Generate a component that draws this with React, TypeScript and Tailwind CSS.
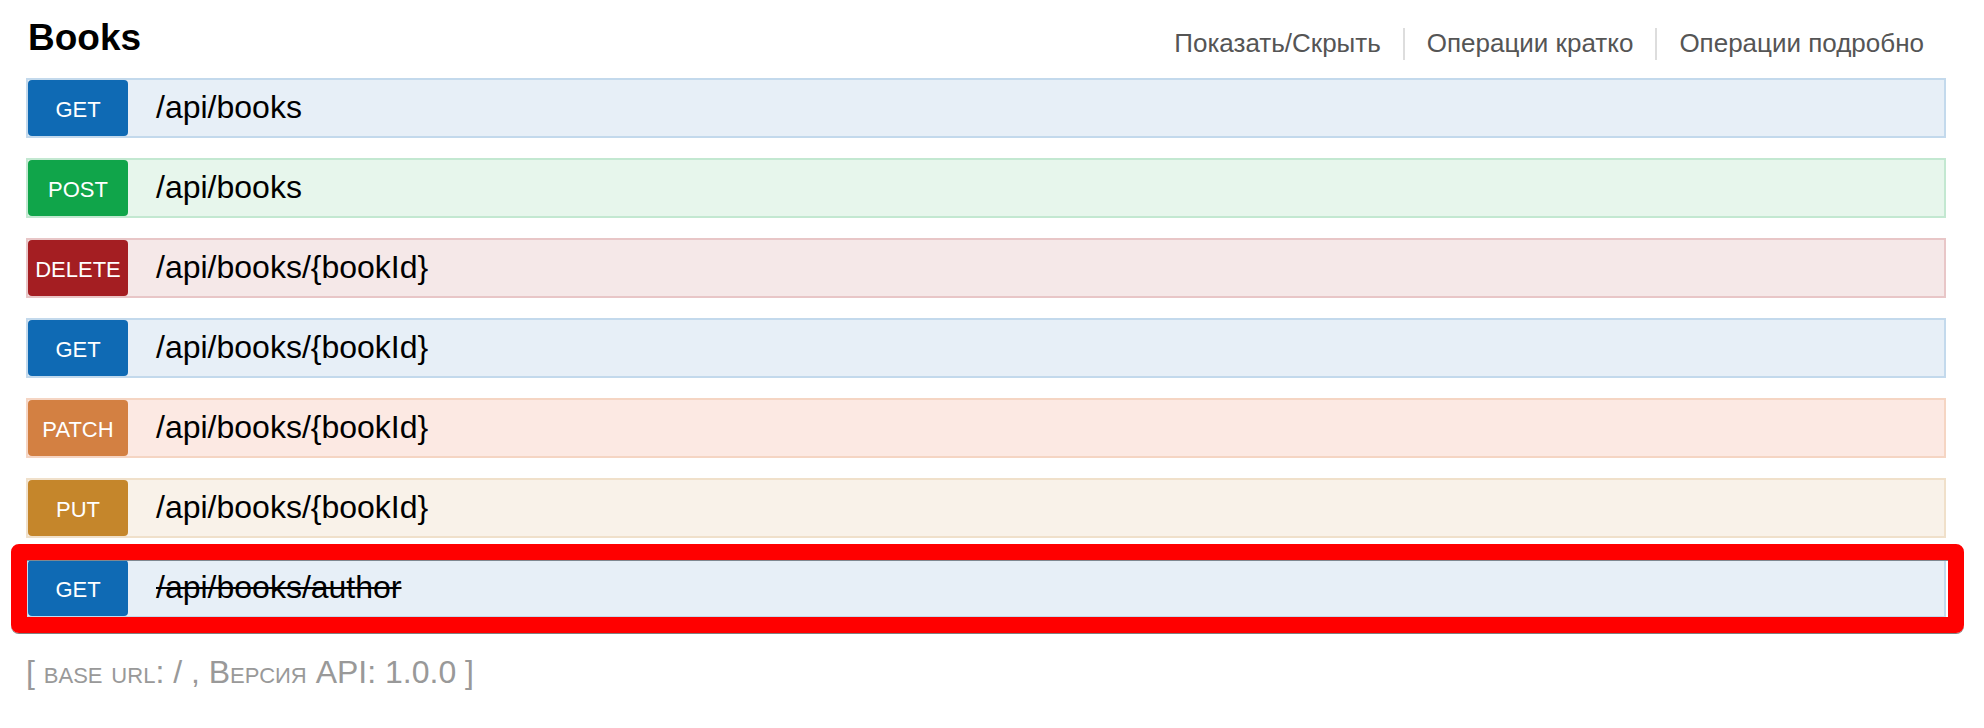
type Operation = {
  method: string;
  path: string;
  row: string;
  badge: string;
  deprecated?: boolean;
};

const GET_ROW = "border-[#c3d9ec] bg-[#e7eff7]";
const GET_BADGE = "bg-[#0f6ab4]";

const operations: Operation[] = [
  { method: "GET", path: "/api/books", row: GET_ROW, badge: GET_BADGE },
  { method: "POST", path: "/api/books", row: "border-[#c3e8d1] bg-[#e7f6ec]", badge: "bg-[#10a54a]" },
  { method: "DELETE", path: "/api/books/{bookId}", row: "border-[#e8c6c7] bg-[#f5e8e8]", badge: "bg-[#a41e22]" },
  { method: "GET", path: "/api/books/{bookId}", row: GET_ROW, badge: GET_BADGE },
  { method: "PATCH", path: "/api/books/{bookId}", row: "border-[#f5d5c3] bg-[#fce9e3]", badge: "bg-[#d38042]" },
  { method: "PUT", path: "/api/books/{bookId}", row: "border-[#f0e0ca] bg-[#f9f2e9]", badge: "bg-[#c5862b]" },
  { method: "GET", path: "/api/books/author", row: GET_ROW, badge: GET_BADGE, deprecated: true },
];

const actions = ["Показать/Скрыть", "Операции кратко", "Операции подробно"];

function OperationRow({ method, path, row, badge, deprecated }: Operation) {
  return (
    <li className="relative">
      <a href="#operation" className={`flex border-2 ${row}`}>
        <span
          className={`flex h-14 w-[100px] shrink-0 items-center justify-center rounded pt-1 text-[22px] leading-7 text-white ${badge}`}
        >
          {method}
        </span>
        <span
          className={`pl-7 text-[32px] leading-[54px] text-black ${deprecated ? "line-through decoration-2" : ""}`}
        >
          {path}
        </span>
      </a>
      {deprecated && (
        <span className="pointer-events-none absolute -top-3.5 -right-[18px] -bottom-[15px] -left-[15px] rounded-lg border-16 border-[#ff0000] shadow-[0_1px_0_#808080,inset_0_1px_0_#808890]" />
      )}
    </li>
  );
}

export default function App() {
  return (
    <main className="min-h-screen bg-white pt-4 pr-[38px] pl-[26px] font-['Liberation_Sans',Arial,sans-serif]">
      <header className="flex items-start justify-between pb-[18px]">
        <h2 className="pl-0.5 text-[37px] leading-[44px] font-bold text-black">Books</h2>
        <ul className="flex pt-3 pr-[22px]">
          {actions.map((label, i) => (
            <li
              key={label}
              className={`h-8 text-[26px] leading-[30px] text-[#555555] ${i > 0 ? "ml-[22px] border-l-2 border-[#dddddd] pl-[22px]" : ""}`}
            >
              <a href="#books">{label}</a>
            </li>
          ))}
        </ul>
      </header>
      <ul className="flex flex-col gap-5">
        {operations.map((op, i) => (
          <OperationRow key={i} {...op} />
        ))}
      </ul>
      <footer className="pt-[34px] text-[32px] leading-10 text-[#999999] [font-variant-caps:small-caps]">
        [ base url: / , Версия API: 1.0.0 ]
      </footer>
    </main>
  );
}
